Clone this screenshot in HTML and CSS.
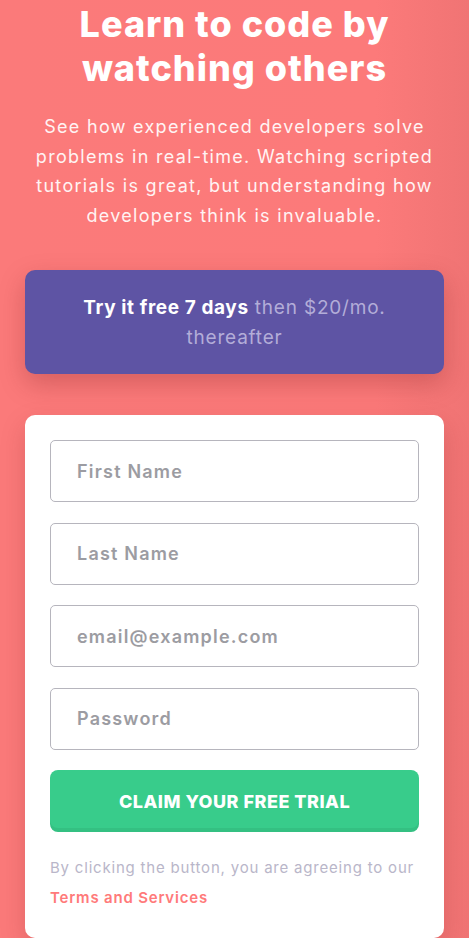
FILE: index.html
```html
<!DOCTYPE html>
<html lang="en">
<head>
<meta charset="utf-8">
<title>Intro component with sign up form</title>
<link rel="stylesheet" href="styles.css">
</head>
<body>
<main class="page">
  <section class="intro">
    <h1 class="title">Learn to code by watching others</h1>
    <p class="lead">See how experienced developers solve problems in real-time. Watching scripted tutorials is great, but understanding how developers think is invaluable.</p>
  </section>
  <section class="signup">
    <p class="offer"><strong class="offer-strong">Try it free 7 days</strong> <span class="offer-rest">then $20/mo.</span> <span class="offer-rest">thereafter</span></p>
    <form class="card">
      <input class="field" type="text" placeholder="First Name">
      <input class="field" type="text" placeholder="Last Name">
      <input class="field" type="email" placeholder="email@example.com">
      <input class="field" type="password" placeholder="Password">
      <button class="cta" type="button">Claim your free trial</button>
      <p class="terms">By clicking the button, you are agreeing to our <a class="terms-link" href="#">Terms and Services</a></p>
    </form>
  </section>
</main>
</body>
</html>
```
FILE: styles.css
```css
* { box-sizing: border-box; }
html, body { margin: 0; padding: 0; }
body {
  background: linear-gradient(90deg, #fb7a7a 0%, #fc7a7a 80%, #f07474 100%);
  font-family: Inter, "Open Sans", "DejaVu Sans", sans-serif;
  color: #fff;
  overflow: hidden;
}
.page {
  padding: 2px 25px 0;
  display: flex;
  flex-direction: column;
}
.intro { text-align: center; }
.title {
  margin: 0;
  font-size: 36px;
  line-height: 44px;
  font-weight: 800;
  letter-spacing: 1px;
  padding: 0 40px;
}
.lead {
  margin: 22px 0 0;
  font-size: 18px;
  line-height: 29.5px;
  font-weight: 400;
  letter-spacing: 1.3px;
  color: #fff3f3;
}
.signup {
  margin-top: 40px;
  display: flex;
  flex-direction: column;
  gap: 41px;
}
.offer {
  margin: 0;
  background: #5e54a4;
  border-radius: 10px;
  padding: 23px 40px 21px;
  text-align: center;
  font-size: 19px;
  line-height: 30px;
  letter-spacing: 0.8px;
  color: #b3add8;
  box-shadow: 0 10px 26px rgba(120, 30, 30, 0.28);
}
.offer-strong { color: #fff; font-weight: 700; letter-spacing: 0.6px; }
.offer-rest { color: #b3add8; }
.card {
  background: #fff;
  border-radius: 10px;
  padding: 25px 25px 25px;
  display: flex;
  flex-direction: column;
  gap: 20.5px;
  box-shadow: 0 10px 26px rgba(120, 30, 30, 0.2);
}
.field {
  height: 62px;
  width: 100%;
  border: 1px solid #b6b5bd;
  border-radius: 5px;
  padding: 0 26px;
  font-family: inherit;
  font-size: 18px;
  font-weight: 600;
  letter-spacing: 1.2px;
  color: #3d3b48;
  background: #fff;
  outline: none;
}
.field::placeholder { color: #9c9ca2; }
.cta {
  height: 62px;
  border: 0;
  border-radius: 8px;
  background: #38cc8b;
  color: #fff;
  font-family: inherit;
  font-size: 18px;
  font-weight: 800;
  text-transform: uppercase;
  letter-spacing: 0.5px;
  box-shadow: inset 0 -4px 0 rgba(0,0,0,0.06);
}
.terms {
  margin: 0;
  font-size: 15px;
  line-height: 30px;
  letter-spacing: 0.8px;
  color: #b9b6c9;
}
.terms-link {
  display: inline-block;
  color: #ff7a7a;
  font-weight: 600;
  letter-spacing: 0.8px;
  text-decoration: none;
}
```
